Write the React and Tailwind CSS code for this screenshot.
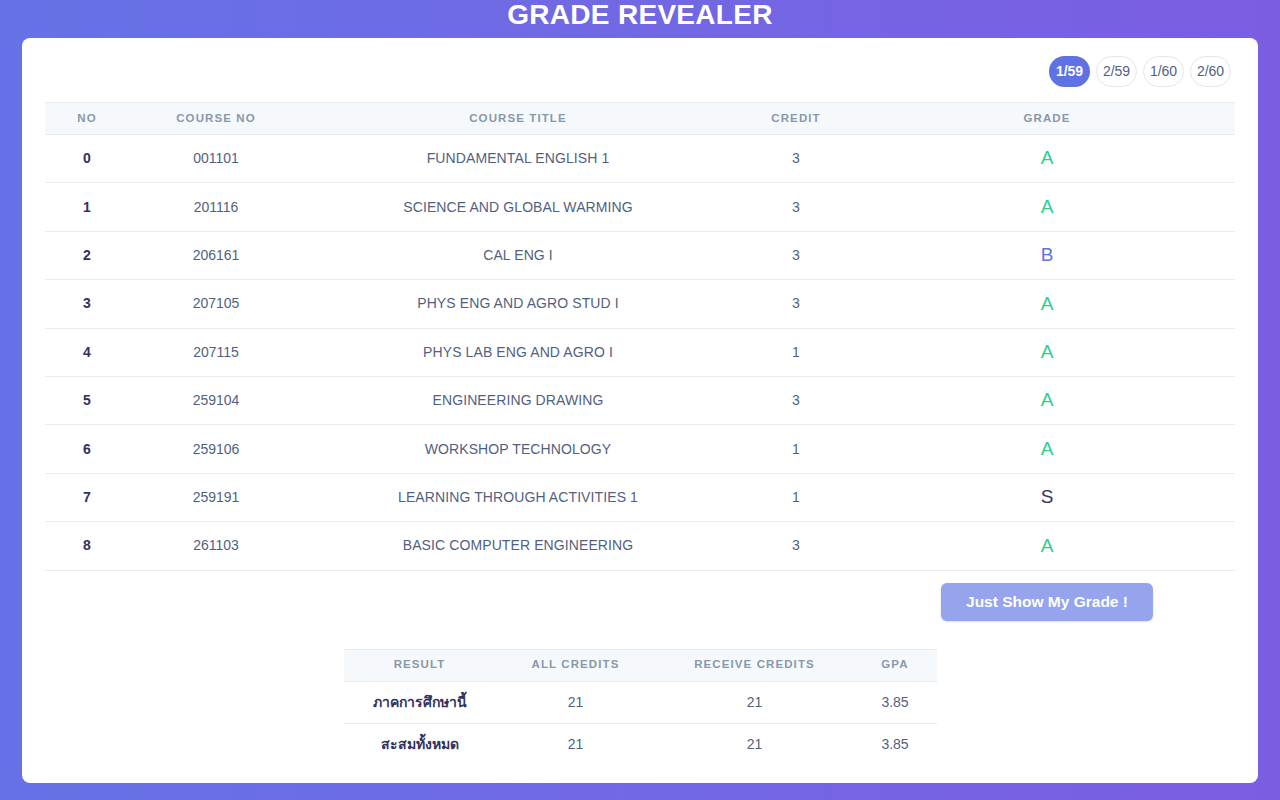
import React from "react"

const courses = [
  { no: 0, code: "001101", title: "FUNDAMENTAL ENGLISH 1", credit: 3, grade: "A" },
  { no: 1, code: "201116", title: "SCIENCE AND GLOBAL WARMING", credit: 3, grade: "A" },
  { no: 2, code: "206161", title: "CAL ENG I", credit: 3, grade: "B" },
  { no: 3, code: "207105", title: "PHYS ENG AND AGRO STUD I", credit: 3, grade: "A" },
  { no: 4, code: "207115", title: "PHYS LAB ENG AND AGRO I", credit: 1, grade: "A" },
  { no: 5, code: "259104", title: "ENGINEERING DRAWING", credit: 3, grade: "A" },
  { no: 6, code: "259106", title: "WORKSHOP TECHNOLOGY", credit: 1, grade: "A" },
  { no: 7, code: "259191", title: "LEARNING THROUGH ACTIVITIES 1", credit: 1, grade: "S" },
  { no: 8, code: "261103", title: "BASIC COMPUTER ENGINEERING", credit: 3, grade: "A" },
]

const terms = ["1/59", "2/59", "1/60", "2/60"]

const gradeColor = {
  A: "text-[#2dce89]",
  B: "text-[#5e72e4]",
  S: "text-[#32325d]",
}

export default function App() {
  return (
    <div
      className="min-h-[800px] w-full bg-gradient-to-r from-[#6572e5] to-[#7c5de2] px-[22px] pb-[17px]"
      style={{ fontFamily: '"Liberation Sans", Arial, sans-serif' }}
    >
      <div className="flex h-[38px] justify-center pt-[1px]">
        <h1 className="text-[28px] font-bold leading-[28px] tracking-[0.3px] text-white">GRADE REVEALER</h1>
      </div>

      <div className="rounded-lg bg-white px-[23px] pb-[18px] pt-[18px]">
        {/* term pills */}
        <div className="flex justify-end gap-[6px] pr-[4px]">
          {terms.map((t, i) => (
            <button
              key={t}
              className={`h-[31px] w-[41px] rounded-full text-[14px] ${
                i === 0
                  ? "bg-[#5e72e4] font-semibold text-white"
                  : "border border-[#e3e6ea] bg-white text-[#525f7f]"
              }`}
            >
              {t}
            </button>
          ))}
        </div>

        {/* courses table */}
        <table className="mt-[15px] w-full table-fixed border-collapse">
          <colgroup>
            <col className="w-[84px]" />
            <col className="w-[174px]" />
            <col className="w-[430px]" />
            <col className="w-[126px]" />
            <col />
          </colgroup>
          <thead>
            <tr className="h-[32px] border-y border-[#e9ecef] bg-[#f6f9fc] text-[11.5px] font-bold tracking-[1.1px] text-[#8898aa]">
              <th>NO</th>
              <th>COURSE NO</th>
              <th>COURSE TITLE</th>
              <th>CREDIT</th>
              <th>GRADE</th>
            </tr>
          </thead>
          <tbody>
            {courses.map((c) => (
              <tr key={c.no} className="h-[48.4px] border-b border-[#e9ecef] text-center text-[14px] text-[#525f7f]">
                <td className="font-bold text-[#32325d]">{c.no}</td>
                <td>{c.code}</td>
                <td className="tracking-[0.1px]">{c.title}</td>
                <td>{c.credit}</td>
                <td className={`text-[19px] ${gradeColor[c.grade]}`}>{c.grade}</td>
              </tr>
            ))}
          </tbody>
        </table>

        <div className="mt-[12px] flex">
          <div className="w-[814px]" />
          <div className="flex flex-1 justify-center">
            <button className="h-[38px] w-[212px] rounded-md bg-[#95a4ec] text-[15.5px] font-bold text-white shadow-sm">
              Just Show My Grade !
            </button>
          </div>
        </div>

        {/* summary */}
        <table className="mx-auto mt-[28px] w-[593px] table-fixed border-collapse">
          <colgroup>
            <col className="w-[152px]" />
            <col className="w-[160px]" />
            <col className="w-[198px]" />
            <col />
          </colgroup>
          <thead>
            <tr className="h-[32px] border-y border-[#e9ecef] bg-[#f6f9fc] text-[11.5px] font-bold tracking-[1.1px] text-[#8898aa]">
              <th>RESULT</th>
              <th>ALL CREDITS</th>
              <th>RECEIVE CREDITS</th>
              <th>GPA</th>
            </tr>
          </thead>
          <tbody>
            <tr className="h-[42px] border-b border-[#e9ecef] text-center text-[14px] text-[#525f7f]">
              <td className="font-bold text-[#32325d]">ภาคการศึกษานี้</td>
              <td>21</td>
              <td>21</td>
              <td>3.85</td>
            </tr>
            <tr className="h-[42px] text-center text-[14px] text-[#525f7f]">
              <td className="font-bold text-[#32325d]">สะสมทั้งหมด</td>
              <td>21</td>
              <td>21</td>
              <td>3.85</td>
            </tr>
          </tbody>
        </table>
      </div>
    </div>
  )
}
